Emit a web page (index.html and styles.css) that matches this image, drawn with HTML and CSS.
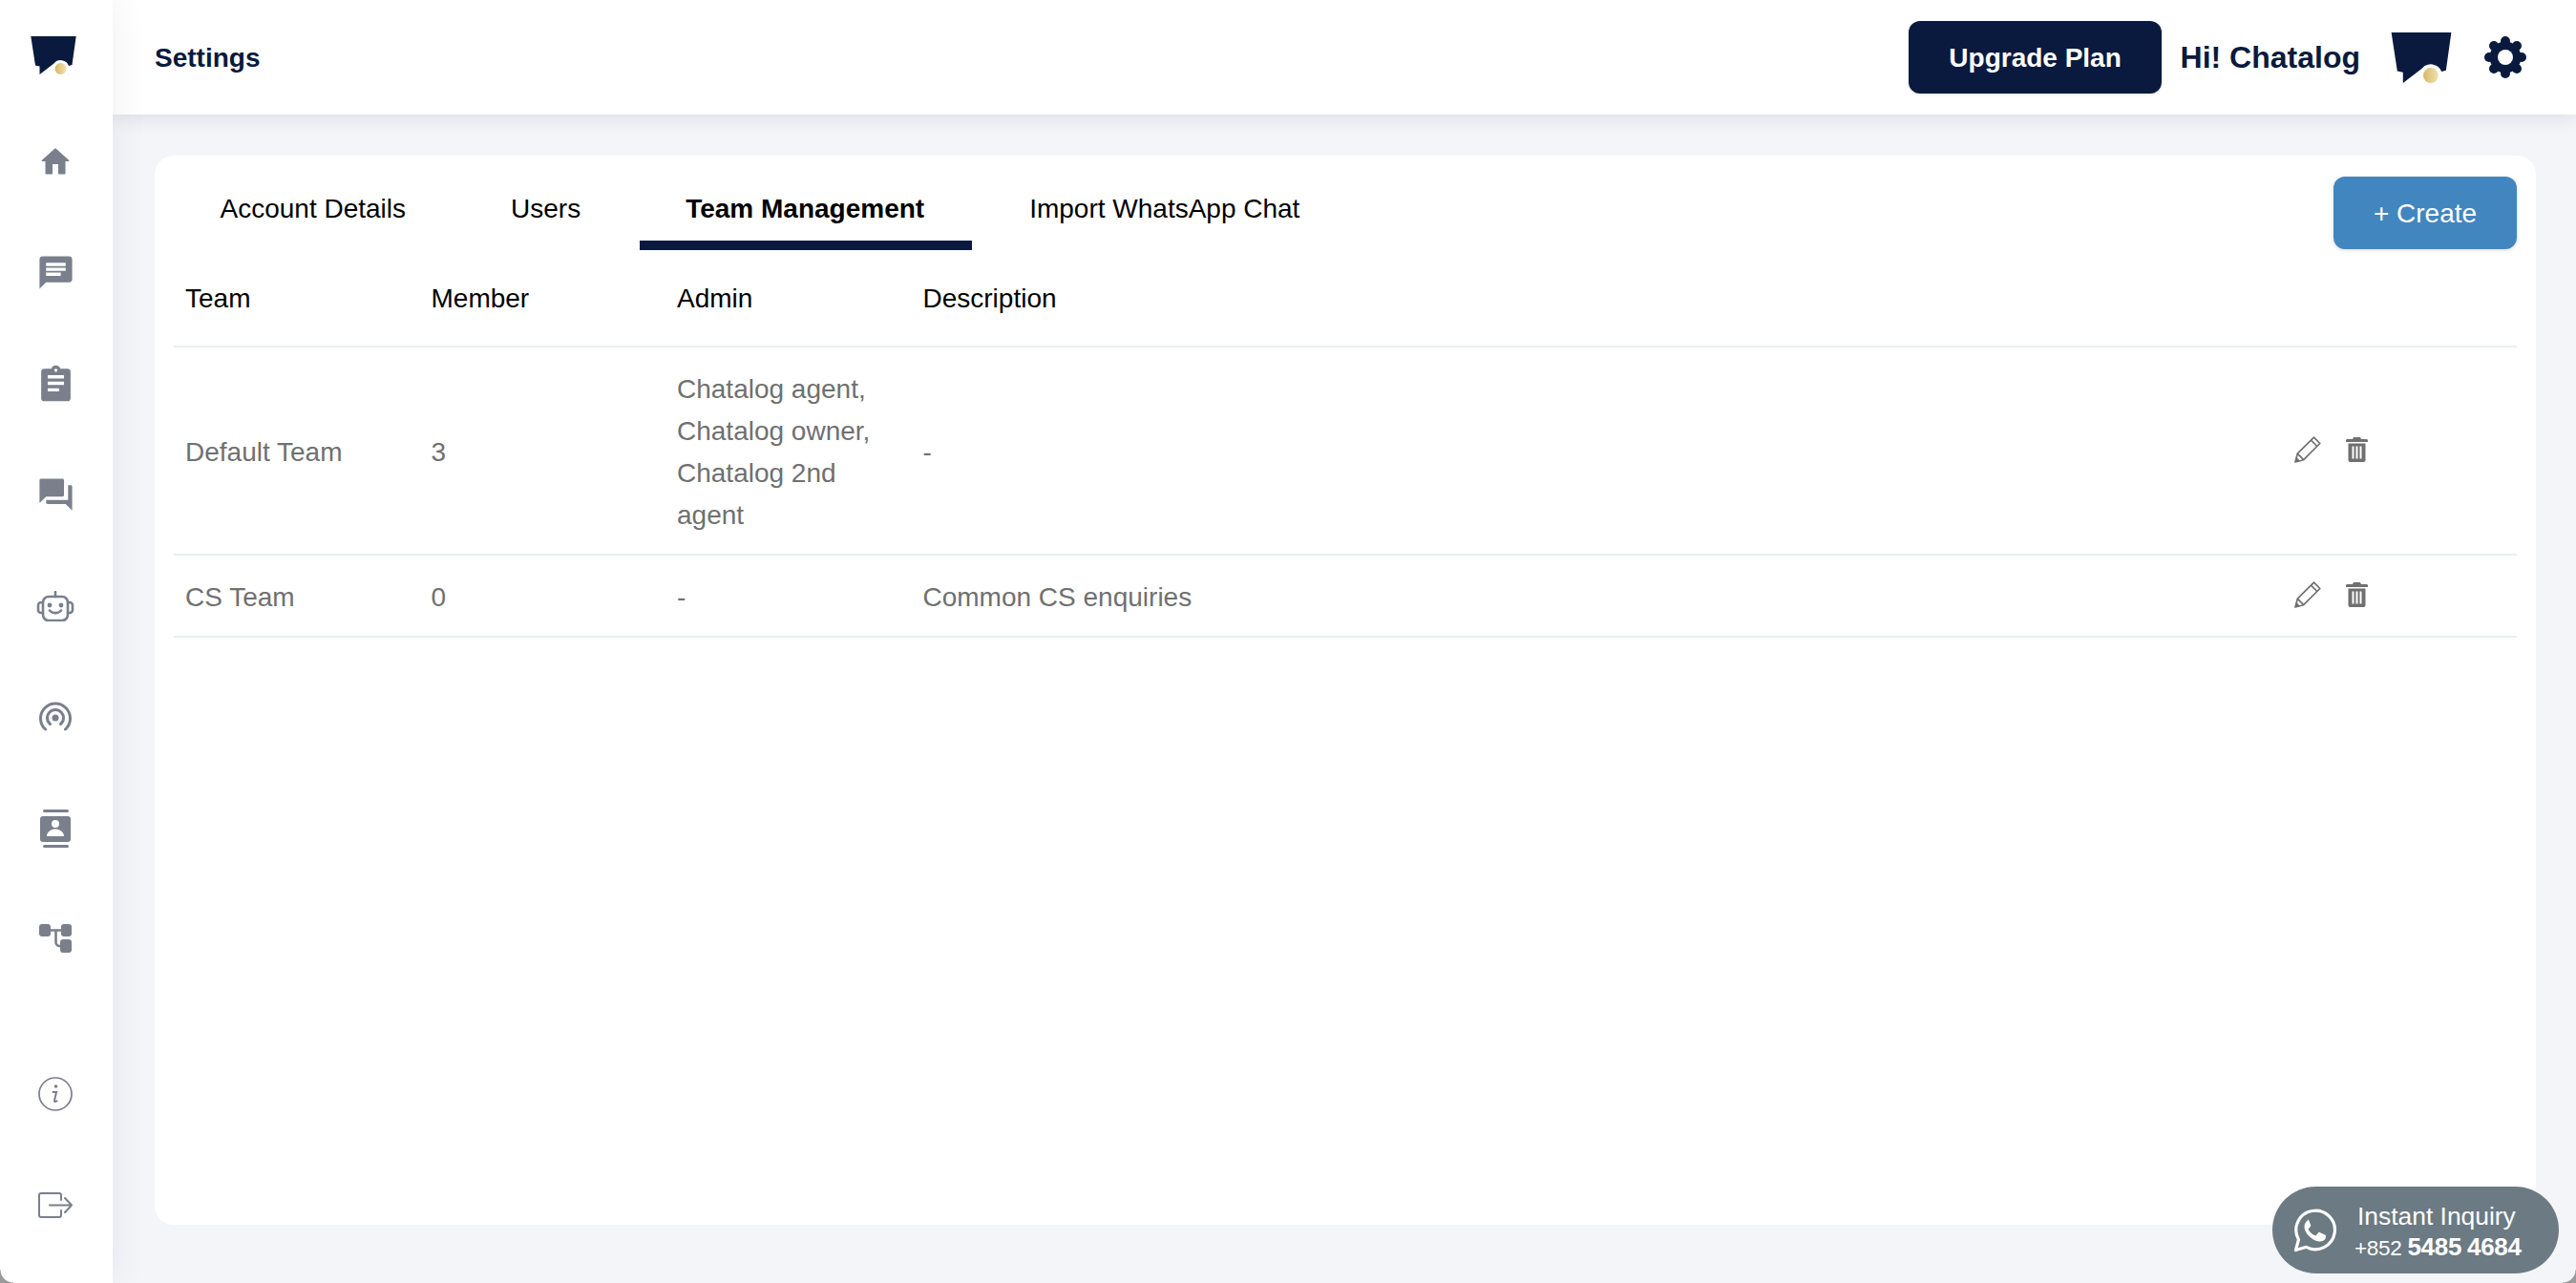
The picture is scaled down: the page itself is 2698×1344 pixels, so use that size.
FILE: index.html
```html
<!DOCTYPE html>
<html lang="en">
<head>
<meta charset="utf-8">
<title>Settings</title>
<link rel="stylesheet" href="styles.css">
</head>
<body>
<div class="app">
  <aside class="sidebar">
    <div class="side-logo">
      <svg class="logo-small" viewBox="0 0 48 40"><use href="#logo"/></svg>
    </div>
    <nav class="side-nav">
      <a class="side-item"><svg class="ic-home" viewBox="0 0 24 24"><path d="M10 20.500v-6.500h4v6.500a.5.5 0 0 0 .5.5h4a.5.5 0 0 0 .5-.5V12h2.300a.4.4 0 0 0 .27-.7L12.300 3a.5.5 0 0 0-.6 0L2.430 11.300a.4.4 0 0 0 .27.7H5v8.500a.5.5 0 0 0 .5.5h4a.5.5 0 0 0 .5-.5z"/></svg></a>
      <a class="side-item"><svg class="ic-md" viewBox="0 0 24 24"><path d="M20 2H4a2 2 0 0 0-2 2v18l4-4h14a2 2 0 0 0 2-2V4a2 2 0 0 0-2-2zM6 14v-2h9v2zm0-3V9h12v2zm12-3H6V6h12z" fill-rule="evenodd"/></svg></a>
      <a class="side-item"><svg class="ic-clip" viewBox="0 0 24 24"><path fill-rule="evenodd" d="M19 3h-4.200C14.400 1.800 13.300 1 12 1s-2.400.8-2.800 2H5a2 2 0 0 0-2 2v16a2 2 0 0 0 2 2h14a2 2 0 0 0 2-2V5a2 2 0 0 0-2-2zm-7 0a1 1 0 1 1 0 2 1 1 0 0 1 0-2zM7 7h10v2H7zm0 4h10v2H7zm0 4h7v2H7z"/></svg></a>
      <a class="side-item"><svg class="ic-md" viewBox="0 0 24 24"><path d="M21 6h-1.500v9H6v1.500c0 .6.400 1 1 1h11l4 4V7c0-.6-.400-1-1-1zM17 12V3c0-.6-.400-1-1-1H3c-.6 0-1 .4-1 1v14l4-4h10c.6 0 1-.4 1-1z"/></svg></a>
      <a class="side-item"><svg class="ic-robot" viewBox="0 0 40 32"><g fill="none" stroke="#7a7f8c" stroke-width="2.600" stroke-linecap="round"><rect x="7" y="6" width="26" height="25" rx="6"/><path d="M20 1v5M7 12H5a3 3 0 0 0-3 3v5a3 3 0 0 0 3 3h2M33 12h2a3 3 0 0 1 3 3v5a3 3 0 0 1-3 3h-2M14 20.500c3 3.500 9 3.500 12 0"/></g><circle cx="14" cy="15" r="2.400" fill="#7a7f8c"/><circle cx="26" cy="15" r="2.400" fill="#7a7f8c"/></svg></a>
      <a class="side-item"><svg class="ic-cast" viewBox="0 0 34 32"><g fill="none" stroke="#7a7f8c" stroke-width="3" stroke-linecap="round"><path d="M6.500 29a15.500 15.500 0 1 1 21 0"/><path d="M11.500 23.500a8.500 8.500 0 1 1 11 0"/></g><circle cx="17" cy="17" r="3.500" fill="#7a7f8c"/></svg></a>
      <a class="side-item"><svg class="ic-contact" viewBox="0 0 32 40"><rect x="3" y="0" width="27" height="3" rx="1.500"/><rect x="3" y="37" width="27" height="3" rx="1.500"/><path fill-rule="evenodd" d="M3 7h26a3 3 0 0 1 3 3v21a3 3 0 0 1-3 3H3a3 3 0 0 1-3-3V10a3 3 0 0 1 3-3zm13 4a4 4 0 1 0 0 8 4 4 0 0 0 0-8zM7 28h18c0-5-5-7.500-9-7.500S7 23 7 28z"/></svg></a>
      <a class="side-item"><svg class="ic-tree" viewBox="0 0 34 31"><rect x="0" y="0" width="12" height="13" rx="3"/><rect x="23" y="0" width="11" height="13" rx="3"/><rect x="22" y="16" width="12" height="14" rx="3"/><path d="M12 6.500h11M17.500 6.500V19a4 4 0 0 0 4 4h1" fill="none" stroke="#7a7f8c" stroke-width="2.600"/></svg></a>
    </nav>
    <nav class="side-bottom">
      <a class="side-item"><svg class="ic-info" viewBox="0 0 36 36"><circle cx="18" cy="18" r="17" fill="none" stroke="#7a7f8c" stroke-width="1.700"/><circle cx="18.500" cy="10" r="1.800" fill="#7a7f8c"/><path d="M15.500 16h3.500l-2 9c-.2 1.200 1 1.200 2.500.3" fill="none" stroke="#7a7f8c" stroke-width="2" stroke-linecap="round"/></svg></a>
      <a class="side-item"><svg class="ic-out" viewBox="0 0 36 27"><path d="M24 8V3a2 2 0 0 0-2-2H3a2 2 0 0 0-2 2v21a2 2 0 0 0 2 2h19a2 2 0 0 0 2-2v-5M12 13.500h23M28 6l7 7.500-7 7.500" fill="none" stroke="#7a7f8c" stroke-width="2" stroke-linecap="round" stroke-linejoin="round"/></svg></a>
    </nav>
  </aside>

  <div class="main">
    <header class="topbar">
      <h1 class="page-title">Settings</h1>
      <div class="top-actions">
        <button class="btn-upgrade">Upgrade Plan</button>
        <span class="greeting">Hi! Chatalog</span>
        <svg class="logo-big" viewBox="0 0 48 40"><use href="#logo"/></svg>
        <svg class="gear" viewBox="0 0 44 44">
          <circle cx="22" cy="22" r="16.500" fill="#0a1a3e"/>
          <circle cx="22" cy="5" r="5"/><circle cx="34" cy="10" r="5"/><circle cx="39" cy="22" r="5"/><circle cx="34" cy="34" r="5"/>
          <circle cx="22" cy="39" r="5"/><circle cx="10" cy="34" r="5"/><circle cx="5" cy="22" r="5"/><circle cx="10" cy="10" r="5"/>
          <circle cx="22" cy="22" r="8" fill="#fff"/>
        </svg>
      </div>
    </header>

    <main class="content">
      <section class="card">
        <div class="tabs-row">
          <ul class="tabs">
            <li class="tab">Account Details</li>
            <li class="tab">Users</li>
            <li class="tab tab-active">Team Management</li>
            <li class="tab">Import WhatsApp Chat</li>
          </ul>
          <button class="btn-create">+ Create</button>
        </div>
        <table class="teams">
          <colgroup><col class="col-std"><col class="col-std"><col class="col-std"><col><col class="col-act"></colgroup>
          <thead>
            <tr><th>Team</th><th>Member</th><th>Admin</th><th>Description</th><th></th></tr>
          </thead>
          <tbody>
            <tr>
              <td>Default Team</td><td>3</td><td>Chatalog agent, Chatalog owner, Chatalog 2nd agent</td><td>-</td>
              <td class="actions"><span class="action-set">
                <svg class="ic-pencil" viewBox="0 0 28 28"><use href="#pencil"/></svg>
                <svg class="ic-trash" viewBox="0 0 23 26"><use href="#trash"/></svg>
              </span></td>
            </tr>
            <tr>
              <td>CS Team</td><td>0</td><td>-</td><td>Common CS enquiries</td>
              <td class="actions"><span class="action-set">
                <svg class="ic-pencil" viewBox="0 0 28 28"><use href="#pencil"/></svg>
                <svg class="ic-trash" viewBox="0 0 23 26"><use href="#trash"/></svg>
              </span></td>
            </tr>
          </tbody>
        </table>
      </section>
    </main>
  </div>
</div>

<a class="inquiry">
  <svg class="ic-wa" viewBox="0 0 48 48"><path d="M3.500 44.500l3-11A20.300 20.300 0 1 1 14.500 41.300z" fill="none" stroke="#fff" stroke-width="3.200" stroke-linejoin="round"/><path fill="#fff" d="M17.500 13c-.7 0-1.900.3-2.800 1.400-1 1.100-2.200 3-2.200 5.600 0 4 3 8 5 10 2.500 2.500 6 5 10 5.500 3 .4 6-.9 7-3 .5-1 .6-2.800.4-3.200-.2-.4-.7-.6-1.500-1-.8-.4-4.200-2.100-4.900-2.300-.7-.2-1.100-.3-1.600.4-.5.7-1.700 2.200-2.100 2.600-.4.400-.8.500-1.500.1-2.500-1.200-4.400-2.400-6.500-5.900-.4-.7 0-1 .4-1.400.8-.9 1.600-1.900 1.900-2.600.2-.5.100-.9 0-1.300-.2-.4-1.600-3.700-2.100-5-.4-.9-.8-.9-1.400-.9z"/></svg>
  <span class="inquiry-text">
    <span class="inquiry-top">Instant Inquiry</span>
    <span class="inquiry-phone"><span class="prefix">+852</span> <b>5485 4684</b></span>
  </span>
</a>
<i class="corner corner-l"></i>
<i class="corner corner-r"></i>

<svg class="defs" width="0" height="0" aria-hidden="true">
  <defs>
    <linearGradient id="gold" x1="0" y1="0" x2="1" y2="0"><stop offset="0" stop-color="#d6b768"/><stop offset="1" stop-color="#f1e2b0"/></linearGradient>
    <symbol id="logo" viewBox="0 0 48 40">
      <path fill="#0a1a3e" d="M.3 0H47.700L43.500 30 40 31A9 9 0 0 0 24.500 28.500L9.500 40V31.500L5 30.500z"/>
      <circle cx="31.500" cy="34" r="6" fill="url(#gold)"/>
    </symbol>
    <symbol id="pencil" viewBox="0 0 28 28">
      <path d="M1 27l2.300-8.800L20.500 1.200l6.300 6.300L9.700 24.700zM3.300 18.200l6.400 6.500M17.500 4.200l6.300 6.300" fill="none" stroke="#707070" stroke-width="1.700" stroke-linejoin="round"/>
      <path d="M1 27l1.300-5 3.700 3.700z" fill="#707070"/>
    </symbol>
    <symbol id="trash" viewBox="0 0 23 26">
      <path fill="#707070" fill-rule="evenodd" d="M8 0h7l1 2h5.500c.8 0 1.500.7 1.500 1.500V5H0V3.500C0 2.700.7 2 1.500 2H7zM2.500 6.500h18V24a2 2 0 0 1-2 2h-14a2 2 0 0 1-2-2zM6.500 9.500v13H8.500v-13zm4 0v13h2v-13zm4 0v13h2v-13z"/>
    </symbol>
  </defs>
</svg>
</body>
</html>
```
FILE: styles.css
```css
* { box-sizing: border-box; }
html, body { margin: 0; height: 100%; overflow: hidden; }
body { font-family: "Liberation Sans", Arial, sans-serif; background: #f4f5f9; color: #000; }
.defs { position: absolute; }

.app { display: flex; height: 1344px; }

.sidebar {
  width: 118px; flex: none; background: #fff; display: flex; flex-direction: column;
  position: relative; z-index: 2; box-shadow: 0 0 40px rgba(10, 26, 62, .07); padding-bottom: 23px;
}
.side-logo { height: 111px; display: flex; justify-content: center; padding: 38px 6px 0 0; }
.logo-small { width: 48px; height: 40px; }
.side-nav, .side-bottom { display: flex; flex-direction: column; }
.side-bottom { margin-top: auto; }
.side-item { height: 116.400px; display: flex; align-items: center; justify-content: center; padding-right: 2px; }
.side-item svg { fill: #7a7f8c; display: block; }
.ic-home { width: 36px; height: 36px; }
.ic-md { width: 41px; height: 41px; }
.ic-clip { width: 41px; height: 41px; }
.ic-robot { width: 40px; height: 32px; }
.ic-cast { width: 34px; height: 32px; }
.ic-contact { width: 32px; height: 40px; }
.ic-tree { width: 34px; height: 31px; }
.ic-info { width: 36px; height: 36px; }
.ic-out { width: 36px; height: 27px; }

.main { flex: 1; min-width: 0; display: flex; flex-direction: column; }
.topbar {
  height: 120px; flex: none; background: #fff; display: flex; align-items: center; justify-content: space-between;
  padding: 0 52px 0 44px; box-shadow: 0 2px 20px rgba(10, 26, 62, .12); position: relative; z-index: 1;
}
.page-title { margin: 0; padding-top: 2px; font-size: 28px; font-weight: 700; color: #0a1a3e; }
.top-actions { display: flex; align-items: center; }
.btn-upgrade {
  width: 265px; height: 76px; border: 0; border-radius: 12px; background: #0a1a3e; color: #fff; padding-top: 2px;
  font: 700 28px "Liberation Sans", Arial, sans-serif; box-shadow: 0 1px 3px rgba(0, 0, 0, .1);
}
.greeting { margin-left: 19.500px; font-size: 32px; font-weight: 700; color: #0a1a3e; }
.logo-big { width: 64px; height: 53px; margin-left: 32px; }
.gear { width: 44px; height: 44px; fill: #0a1a3e; margin-left: 34px; }

.content { flex: 1; padding: 43px 42px 61px 44px; min-height: 0; }
.card { height: 100%; background: #fff; border-radius: 20px; padding: 22px 20px 0; }
.tabs-row { display: flex; justify-content: space-between; align-items: flex-start; height: 77px; }
.tabs { list-style: none; margin: 0 0 0 -1.500px; padding: 0; display: flex; gap: 10px; }
.tab { padding: 11px 50px 0; height: 77px; font-size: 28px; line-height: 46px; white-space: nowrap; }
.tab-active { font-weight: 700; border-bottom: 10px solid #0a1a3e; margin-left: 1.500px; padding-left: 48.500px; }
.btn-create {
  width: 192px; height: 76px; border: 0; border-radius: 12px; background: #4286c0; color: #fff; padding-top: 2px;
  font: 400 28px "Liberation Sans", Arial, sans-serif; box-shadow: 0 1px 4px rgba(0, 0, 0, .15);
}

.teams { width: 100%; border-collapse: collapse; table-layout: fixed; font-size: 28px; line-height: 44px; }
.col-std { width: 257.500px; }
.col-act { width: 245px; }
.teams th, .teams td { text-align: left; padding: 0 12px; border-bottom: 2px solid #eceef2; }
.teams th { font-weight: 400; color: #000; height: 101px; padding-top: 2px; }
.teams td { color: #707070; padding-top: 22px; padding-bottom: 18px; }
.action-set { display: flex; align-items: center; gap: 26px; }
.teams .actions { padding-top: 0; padding-bottom: 2px; }
.ic-pencil { width: 28px; height: 28px; display: block; }
.ic-trash { width: 23px; height: 26px; display: block; }

.inquiry {
  position: absolute; left: 2380px; top: 1243px; width: 300px; height: 91px; border-radius: 46px;
  background: #6c7a83; color: #fff; display: flex; align-items: center; padding-left: 21px; z-index: 5;
}
.ic-wa { width: 48px; height: 48px; flex: none; }
.inquiry-text { display: flex; flex-direction: column; margin-left: 20px; padding-top: 4px; }
.inquiry-top { font-size: 26.400px; line-height: 32px; white-space: nowrap; }
.inquiry-phone { font-size: 26px; line-height: 32px; white-space: nowrap; letter-spacing: -.3px; margin-left: -3px; word-spacing: -1px; }
.prefix { font-size: 22.500px; }
.corner { position: absolute; bottom: 0; width: 14px; height: 14px; z-index: 6; }
.corner-l { left: 0; background: radial-gradient(circle at 100% 0, transparent 13px, #9a9a9a 14px); }
.corner-r { right: 0; background: radial-gradient(circle at 0 0, transparent 13px, #9a9a9a 14px); }
```
